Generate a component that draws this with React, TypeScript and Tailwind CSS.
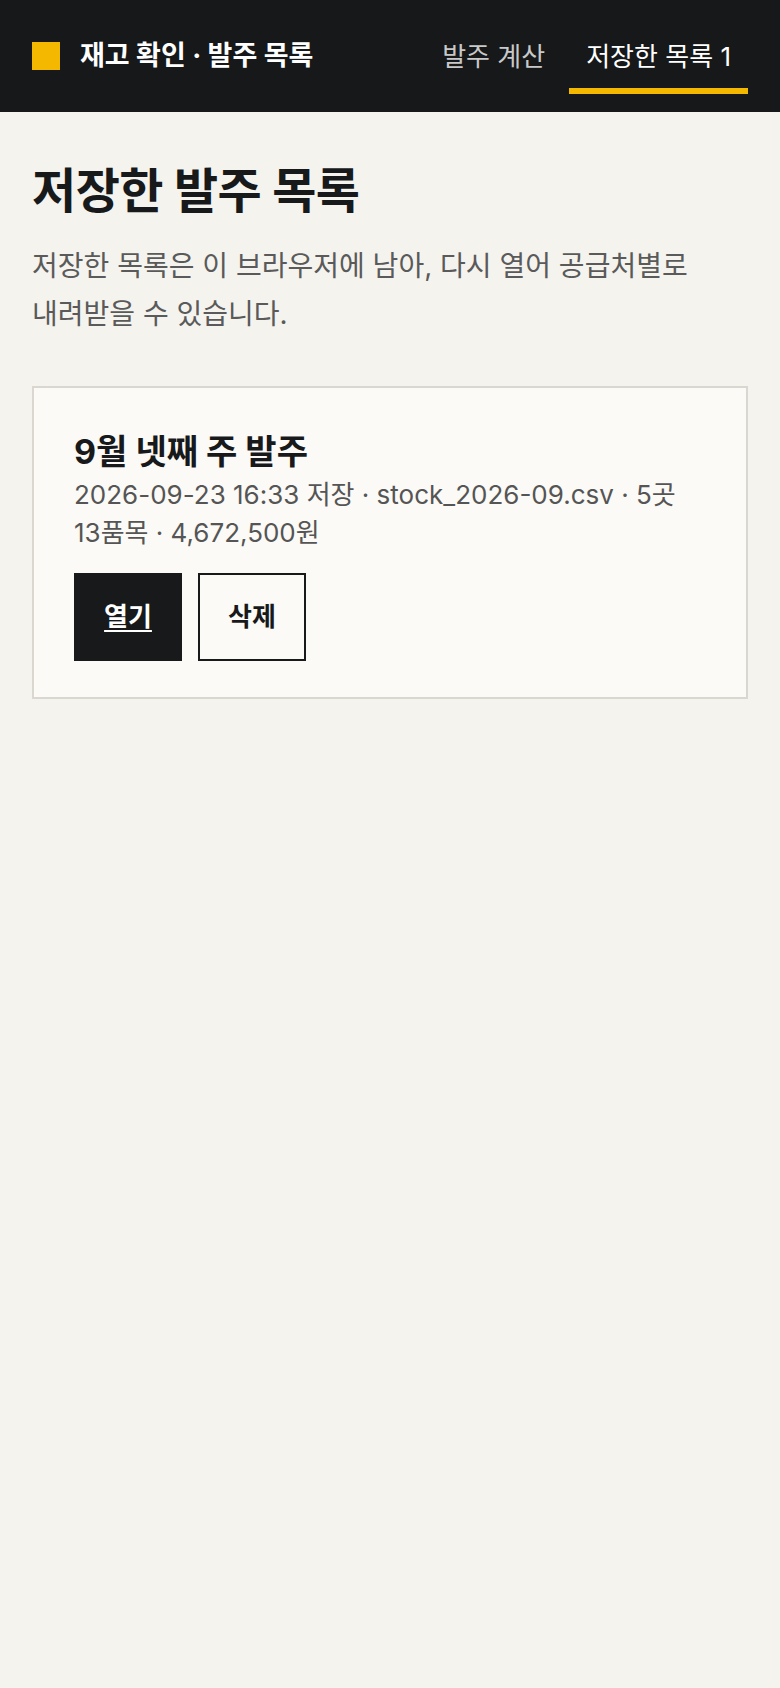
export default function App() {
  return (
    <div
      className="min-h-screen bg-[#f4f3ee] text-[#17191b]"
      style={{ fontFamily: 'Inter, "Noto Sans CJK KR", sans-serif' }}
    >
      <header className="flex h-[112px] items-center justify-between bg-[#16181a] px-8">
        <div className="flex items-center gap-5">
          <span className="h-7 w-7 bg-[#f4b800]" />
          <span className="text-[27px] font-bold text-white">
            재고 확인 · 발주 목록
          </span>
        </div>
        <nav className="flex items-center gap-2">
          <a className="flex h-[76px] items-center border-b-[6px] border-transparent px-4 pt-[6px] text-[26px] text-[#c9c9c9]">
            발주 계산
          </a>
          <a className="flex h-[76px] items-center border-b-[6px] border-[#f4b800] px-[17px] pt-[6px] text-[26px] text-white">
            저장한 목록 1
          </a>
        </nav>
      </header>

      <main className="px-8 pt-[50px]">
        <h1 className="text-[48px] font-bold leading-[1.2] tracking-[-0.01em]">
          저장한 발주 목록
        </h1>
        <p className="mt-[22px] break-keep text-[28px] leading-[48px] text-[#5a5a5a]">
          저장한 목록은 이 브라우저에 남아, 다시 열어 공급처별로 내려받을 수 있습니다.
        </p>

        <section className="mt-12 border-2 border-[#d9d7cf] bg-[#fbfaf6] px-10 pb-9 pt-[42px]">
          <h2 className="text-[34px] font-bold leading-[1.3]">
            9월 넷째 주 발주
          </h2>
          <p className="mt-[2px] break-keep text-[26px] leading-[38px] text-[#555555]">
            2026-09-23 16:33 저장 · stock_2026-09.csv · 5곳 13품목 · 4,672,500원
          </p>
          <div className="mt-[21px] flex gap-4">
            <button className="flex h-[88px] w-[108px] items-center justify-center bg-[#17191b] text-[26px] font-bold text-white underline underline-offset-4">
              열기
            </button>
            <button className="flex h-[88px] w-[108px] items-center justify-center border-2 border-[#17191b] bg-[#fbfaf6] text-[26px] font-bold text-[#17191b]">
              삭제
            </button>
          </div>
        </section>
      </main>
    </div>
  );
}
